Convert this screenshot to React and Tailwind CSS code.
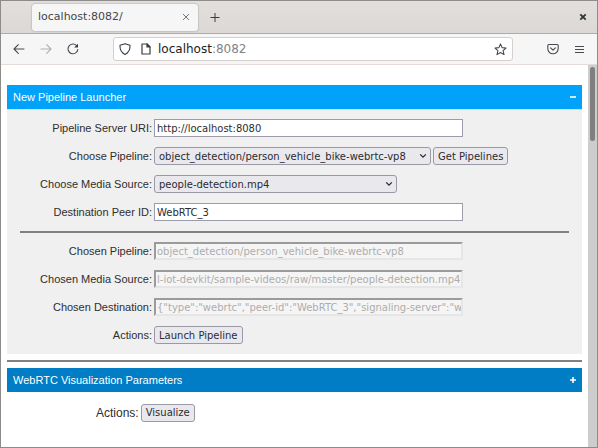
import { useEffect, useRef } from "react";

const buttonBase =
  "flex h-[18px] items-center rounded-[3px] border border-[#9a99a6] bg-[#e9e9ed] px-1 font-['DejaVu_Sans',sans-serif] text-[10px] whitespace-nowrap text-[#2b2b30]";

const chosenBase =
  "block h-[18px] w-[309px] resize-none overflow-hidden border-2 border-t-[#9b9b9b] border-r-[#e6e6e6] border-b-[#e6e6e6] border-l-[#9b9b9b] bg-[#f5f5f5] px-[1px] font-['DejaVu_Sans',sans-serif] text-[10px] leading-[16px] whitespace-pre text-[#adadad]";

function Row({ id, label, children }) {
  return (
    <div className="flex h-[18px] items-center gap-[2px]">
      <label htmlFor={id} className="w-[145px] shrink-0 text-right text-[11px] whitespace-nowrap">
        {label}
      </label>
      {children}
    </div>
  );
}

function TextField({ id, value }) {
  return (
    <textarea
      id={id}
      rows={1}
      defaultValue={value}
      className="block h-[18px] w-[309px] resize-none overflow-hidden border border-[#9c9bac] bg-white px-[2px] font-['DejaVu_Sans',sans-serif] text-[10px] leading-[18px] whitespace-pre text-[#2b2b30] outline-none"
    />
  );
}

function ChosenField({ id, value }) {
  return <textarea id={id} rows={1} disabled value={value} readOnly className={chosenBase} />;
}

// Long addresses are scrolled so that the file name at the end stays visible.
function ChosenAddress({ id, value }) {
  const ref = useRef(null);
  useEffect(() => {
    ref.current.scrollLeft = ref.current.scrollWidth;
  }, [value]);
  return <input id={id} ref={ref} type="text" disabled value={value} readOnly className={chosenBase} />;
}

function Picker({ id, value, width }) {
  return (
    <div className={`relative ${width}`}>
      <select
        id={id}
        className="block h-[18px] w-full appearance-none rounded-[3px] border border-[#9a99a6] bg-[#e9e9ed] px-1 font-['DejaVu_Sans',sans-serif] text-[10px] text-[#2b2b30]"
      >
        <option>{value}</option>
      </select>
      <svg viewBox="0 0 8 6" className="pointer-events-none absolute top-[6px] right-1 h-[6px] w-2" fill="none" stroke="#2b2b30" strokeWidth="1.3">
        <path d="M1.2 1.4 4 4.2 6.8 1.4" />
      </svg>
    </div>
  );
}

function SectionHeader({ title, sign, color }) {
  return (
    <button type="button" className={`flex h-6 w-full items-center justify-between px-[6px] text-[11px] text-white ${color}`}>
      <span>{title}</span>
      <svg viewBox="0 0 6 6" className="h-[6px] w-[6px]" stroke="#fff" strokeWidth="1.6">
        <path d={sign === "plus" ? "M0 3H6M3 0V6" : "M0 3H6"} />
      </svg>
    </button>
  );
}

function TitleBar() {
  return (
    <div className="flex h-[33px] items-center border-b border-[#b3aaa6] bg-gradient-to-b from-[#e2dfdc] to-[#dcd8d5] pr-[10px] pl-[31px]">
      <div className="flex h-[27px] w-[166px] items-center justify-between rounded-[3px] bg-[#f6f6f6] pr-2 pl-[6px] text-[11px] text-[#454548] shadow-[0_0_2px_rgba(0,0,0,0.35)]">
        <span>localhost:8082/</span>
        <button type="button" aria-label="Close tab">
          <svg viewBox="0 0 8 8" className="size-2" stroke="#66666a" strokeWidth="0.9">
            <path d="M1 1 7 7M7 1 1 7" />
          </svg>
        </button>
      </div>
      <button type="button" aria-label="New tab" className="ml-3">
        <svg viewBox="0 0 10 10" className="size-[10px]" stroke="#3c3c40" strokeWidth="1">
          <path d="M.5 5.5H9.5M5 1V10" />
        </svg>
      </button>
      <button type="button" aria-label="Close window" className="ml-auto">
        <svg viewBox="0 0 8 8" className="size-2" stroke="#2e3436" strokeWidth="1.8">
          <path d="M1.3 1.3 6.7 6.7M6.7 1.3 1.3 6.7" />
        </svg>
      </button>
    </div>
  );
}

function Toolbar() {
  return (
    <div className="flex h-[31px] items-center border-b border-[#e4dcd8] bg-[#f6f6f6] pr-[13px] pl-3">
      <button type="button" aria-label="Back">
        <svg viewBox="0 0 12 12" className="size-3" fill="none" stroke="#4a4a4e" strokeWidth="1.1" strokeLinecap="round" strokeLinejoin="round">
          <path d="M11 6H1M5.3 1.7 1 6 5.3 10.3" />
        </svg>
      </button>
      <button type="button" aria-label="Forward" className="ml-[15px]">
        <svg viewBox="0 0 12 12" className="size-3" fill="none" stroke="#b0b0b2" strokeWidth="1.1" strokeLinecap="round" strokeLinejoin="round">
          <path d="M1 6H11M6.7 1.7 11 6 6.7 10.3" />
        </svg>
      </button>
      <button type="button" aria-label="Reload" className="ml-[15px]">
        <svg viewBox="0 0 12 12" className="size-3" fill="none" stroke="#4a4a4e" strokeWidth="1.1" strokeLinecap="round">
          <path d="M10.8 6.6A4.9 4.9 0 1 1 9.6 2.6" />
          <path d="M11 .8V4.6H7.2Z" fill="#3c3c40" stroke="none" />
        </svg>
      </button>
      <div className="ml-[34px] flex h-6 flex-1 items-center rounded-[3px] border border-[#d6cfcb] bg-white px-[5px]">
        <svg viewBox="0 0 12 12" className="size-3" fill="none" stroke="#3c3c40" strokeWidth="1.1" strokeLinejoin="round">
          <path d="M6 .7 11 2.3C11.2 6.5 9.6 9.8 6 11.4 2.4 9.8.8 6.5 1 2.3Z" />
        </svg>
        <svg viewBox="0 0 10 12" className="ml-[10px] h-3 w-[10px]" fill="none" stroke="#3c3c40" strokeWidth="1.2" strokeLinejoin="round">
          <path d="M1 1H6L9 4V11H1Z" />
          <path d="M6 1V4H9Z" fill="#3c3c40" />
        </svg>
        <div className="ml-[7px] flex-1 text-xs text-[#828286]">
          <span className="text-[#1c1b22]">localhost</span>:8082
        </div>
        <button type="button" aria-label="Bookmark this page">
          <svg viewBox="0 0 13 13" className="size-[13px]" fill="none" stroke="#4a4a4e" strokeWidth="1.1" strokeLinejoin="round">
            <path d="M6.5 1 8.1 4.6 12 5 9.1 7.6 10 11.6 6.5 9.5 3 11.6 3.9 7.6 1 5 4.9 4.6Z" />
          </svg>
        </button>
      </div>
      <button type="button" aria-label="Save to Pocket" className="ml-[34px]">
        <svg viewBox="0 0 12 12" className="size-3" fill="none" stroke="#4a4a4e" strokeWidth="1.1" strokeLinecap="round" strokeLinejoin="round">
          <path d="M1.8 1.5H10.2Q11.2 1.5 11.2 2.5V5.6A5.2 5.2 0 0 1 .8 5.6V2.5Q.8 1.5 1.8 1.5Z" />
          <path d="M3.6 4.8 6 7.1 8.4 4.8" />
        </svg>
      </button>
      <button type="button" aria-label="Open menu" className="ml-4">
        <svg viewBox="0 0 9 9" className="size-[9px]" stroke="#4a4a4e" strokeWidth="1">
          <path d="M0 1.5H9M0 4.5H9M0 7.5H9" />
        </svg>
      </button>
    </div>
  );
}

export default function App() {
  return (
    <div className="flex min-h-screen flex-col border border-[#8d8c8a] bg-white font-['DejaVu_Sans',sans-serif]">
      <TitleBar />
      <Toolbar />
      <div className="flex flex-1">
        <main className="min-w-0 flex-1 px-[6px] pt-5 font-['Liberation_Sans',Arial,sans-serif] text-[#2e2e2e]">
          <SectionHeader title="New Pipeline Launcher" sign="minus" color="bg-[#00a2fa]" />
          <form className="border-t border-[#dcdcdc] bg-[#f0f0f0] pt-[9px] pb-[10px]">
            <div className="flex flex-col gap-[10px]">
              <Row id="uri" label="Pipeline Server URI:">
                <TextField id="uri" value="http://localhost:8080" />
              </Row>
              <Row id="pipeline" label="Choose Pipeline:">
                <Picker id="pipeline" value="object_detection/person_vehicle_bike-webrtc-vp8" width="w-[277px]" />
                <button type="button" className={buttonBase}>Get Pipelines</button>
              </Row>
              <Row id="media" label="Choose Media Source:">
                <Picker id="media" value="people-detection.mp4" width="w-[243px]" />
              </Row>
              <Row id="peer" label="Destination Peer ID:">
                <TextField id="peer" value="WebRTC_3" />
              </Row>
            </div>
            <hr className="mx-[13px] mt-[10px] mb-[9px] border-t-2 border-[#808080]" />
            <div className="flex flex-col gap-[10px]">
              <Row id="chosen-pipeline" label="Chosen Pipeline:">
                <ChosenField id="chosen-pipeline" value="object_detection/person_vehicle_bike-webrtc-vp8" />
              </Row>
              <Row id="chosen-media" label="Chosen Media Source:">
                <ChosenAddress
                  id="chosen-media"
                  value="https://github.com/intel-iot-devkit/sample-videos/raw/master/people-detection.mp4"
                />
              </Row>
              <Row id="chosen-destination" label="Chosen Destination:">
                <ChosenField
                  id="chosen-destination"
                  value={'{"type":"webrtc","peer-id":"WebRTC_3","signaling-server":"ws://localhost:8443"}'}
                />
              </Row>
              <Row id="launch" label="Actions:">
                <button id="launch" type="button" className={buttonBase}>Launch Pipeline</button>
              </Row>
            </div>
          </form>
          <hr className="my-[6px] border-t-2 border-[#808080]" />
          <SectionHeader title="WebRTC Visualization Parameters" sign="plus" color="bg-[#007dc5]" />
          <div className="mt-3 flex items-center gap-[2px] pl-[89px] text-xs">
            <label htmlFor="visualize">Actions:</label>
            <button id="visualize" type="button" className={buttonBase}>Visualize</button>
          </div>
        </main>
        <div className="w-[9px] bg-[#cdcdcd] px-[2px] pt-[2px]">
          <div className="h-[74px] rounded-full bg-[#7e8080]" />
        </div>
      </div>
    </div>
  );
}
